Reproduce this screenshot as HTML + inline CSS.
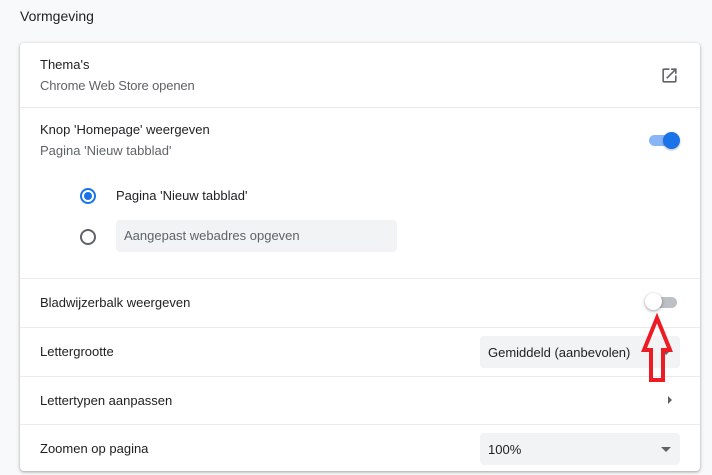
<!DOCTYPE html>
<html><head><style>
body{margin:0;width:712px;height:475px;background:#f8f9fa;font-family:"Liberation Sans",sans-serif;font-size:13px;color:#202124;position:relative;overflow:hidden}
.a{position:absolute;white-space:nowrap}
.card{position:absolute;left:20px;top:43px;width:680px;height:428px;background:#fff;border-radius:4px;box-shadow:0 1px 2px rgba(60,64,67,.3),0 1px 3px 1px rgba(60,64,67,.15)}
.hr{position:absolute;left:20px;width:680px;height:1px;background:#e8eaed}
.sub{color:#5f6368}
.sel{position:absolute;left:480px;width:200px;height:32px;background:#f1f3f4;border-radius:4px}
.sel span{position:absolute;left:8px;top:9px}
.tri{position:absolute;right:9px;top:14px;width:0;height:0;border-left:5px solid transparent;border-right:5px solid transparent;border-top:5px solid #5f6368}
</style></head><body>
<div class="a" style="left:20px;top:8px;font-size:14px">Vormgeving</div>
<div class="card"></div>
<div class="a" style="left:40px;top:57px">Thema's</div>
<div class="a sub" style="left:40px;top:78px;letter-spacing:-0.15px">Chrome Web Store openen</div>
<svg class="a" style="left:660px;top:66px" width="19" height="19" viewBox="0 0 24 24"><path d="M19 19H5V5h7V3H5a2 2 0 0 0-2 2v14a2 2 0 0 0 2 2h14c1.1 0 2-.9 2-2v-7h-2v7zM14 3v2h3.59l-9.83 9.83 1.41 1.41L19 6.41V10h2V3h-7z" fill="#5f6368"/></svg>
<div class="hr" style="top:107px"></div>
<div class="a" style="left:40px;top:122px">Knop 'Homepage' weergeven</div>
<div class="a sub" style="left:40px;top:143px">Pagina 'Nieuw tabblad'</div>
<div class="a" style="left:649px;top:135px;width:28px;height:11px;border-radius:6px;background:#8ab4f8"></div>
<div class="a" style="left:663px;top:132px;width:17px;height:17px;border-radius:50%;background:#1a73e8;box-shadow:0 1px 2px rgba(0,0,0,.3)"></div>
<div class="a" style="left:80px;top:188px;width:12px;height:12px;border:2px solid #1a73e8;border-radius:50%"></div>
<div class="a" style="left:84px;top:192px;width:8px;height:8px;background:#1a73e8;border-radius:50%"></div>
<div class="a" style="left:116px;top:188px">Pagina 'Nieuw tabblad'</div>
<div class="a" style="left:80px;top:229px;width:12px;height:12px;border:2px solid #5f6368;border-radius:50%"></div>
<div class="a" style="left:116px;top:220px;width:281px;height:32px;background:#f1f3f4;border-radius:4px"></div>
<div class="a sub" style="left:124px;top:228px">Aangepast webadres opgeven</div>
<div class="hr" style="top:278px"></div>
<div class="a" style="left:40px;top:295px">Bladwijzerbalk weergeven</div>
<div class="a" style="left:647px;top:297px;width:30px;height:11px;border-radius:6px;background:#bdc1c6"></div>
<div class="a" style="left:645px;top:293px;width:17px;height:17px;border-radius:50%;background:#fff;box-shadow:0 1px 3px rgba(0,0,0,.4)"></div>
<div class="hr" style="top:327px"></div>
<div class="a" style="left:40px;top:344px">Lettergrootte</div>
<div class="sel" style="top:336px"><span>Gemiddeld (aanbevolen)</span><div class="tri"></div></div>
<div class="hr" style="top:376px"></div>
<div class="a" style="left:40px;top:393px">Lettertypen aanpassen</div>
<div class="a" style="left:668px;top:396px;width:0;height:0;border-top:4px solid transparent;border-bottom:4px solid transparent;border-left:4px solid #5f6368"></div>
<div class="hr" style="top:424px"></div>
<div class="a" style="left:40px;top:441px">Zoomen op pagina</div>
<div class="sel" style="top:433px"><span>100%</span><div class="tri"></div></div>
<svg class="a" style="left:0;top:0" width="712" height="475"><polygon points="657,318 644,350 651,350 651,380 663,380 663,350 670,350" fill="none" stroke="#ed1c24" stroke-width="4" stroke-linejoin="miter"/></svg>
</body></html>
